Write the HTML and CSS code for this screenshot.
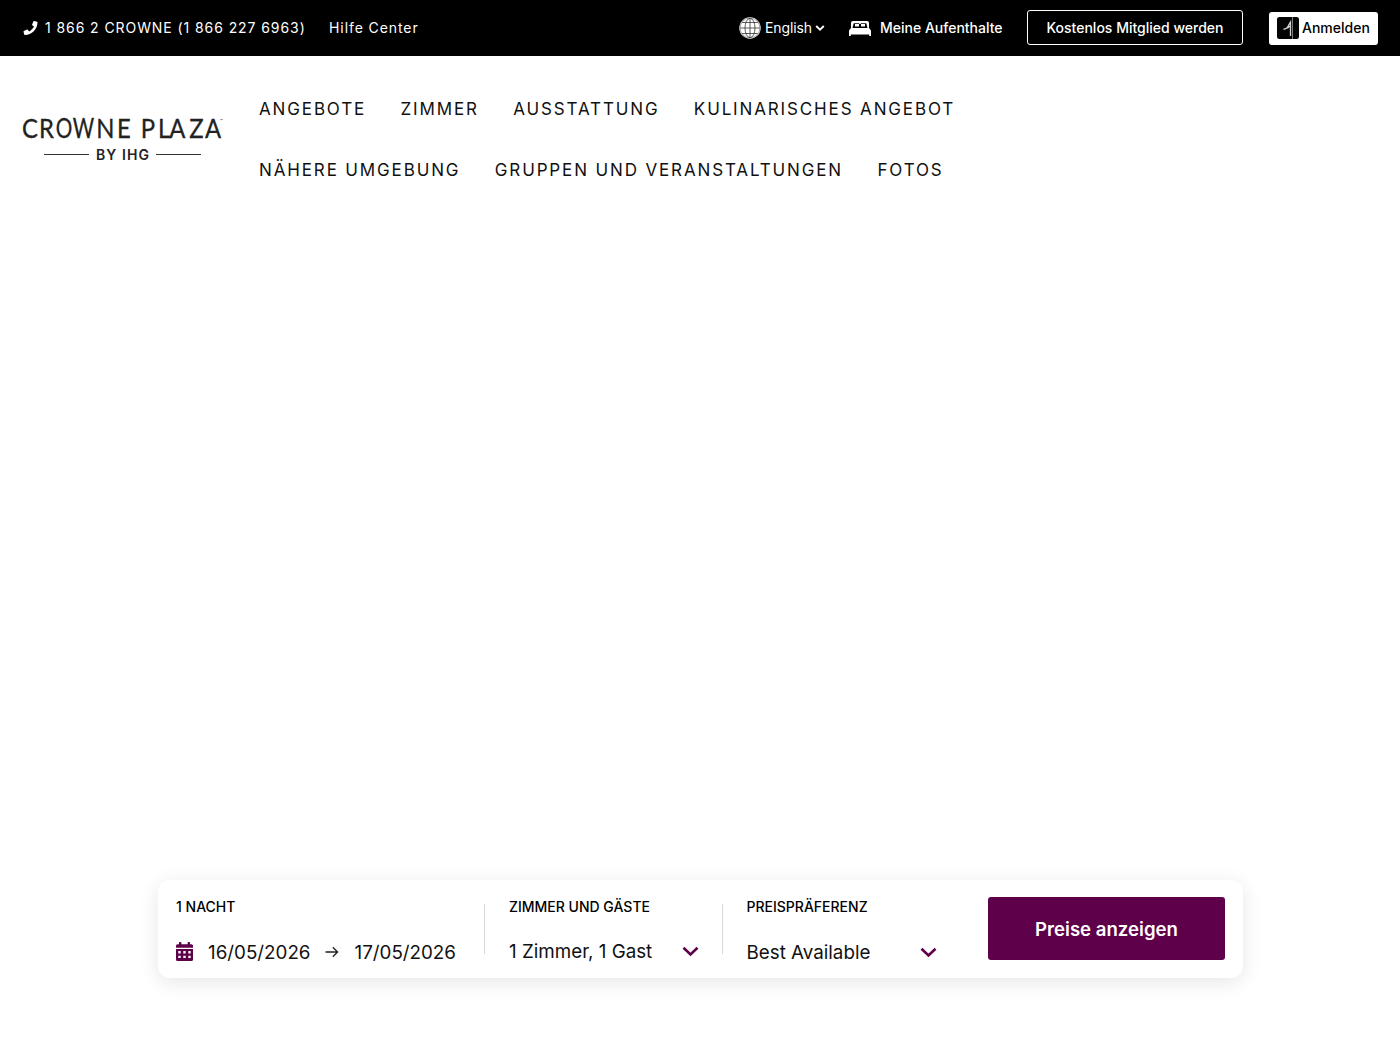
FILE: index.html
```html
<!DOCTYPE html>
<html lang="de">
<head>
<meta charset="utf-8">
<title>Crowne Plaza</title>
<link rel="stylesheet" href="styles.css">
</head>
<body>
<header class="topbar">
  <a class="phone">
    <svg class="phone-icon" viewBox="0 0 512 512"><path fill="#fff" d="M493 25 389 1c-11-3-23 3-27 14l-48 112c-4 10-1 22 7 28l61 50c-36 76-99 140-177 177l-50-61c-7-8-18-11-28-7L15 362c-11 5-17 16-14 27l24 104c3 11 12 19 24 19 256 0 463-207 463-463 0-12-8-22-19-24z"/></svg>
    <span>1 866 2 CROWNE (1 866 227 6963)</span>
  </a>
  <a class="help">Hilfe Center</a>
  <div class="language">
    <svg class="globe" viewBox="0 0 22 22"><circle cx="11" cy="11" r="10.7" fill="#fff"/><g fill="none" stroke="#333" stroke-width=".8"><circle cx="11" cy="11" r="9.9" stroke="#888"/><ellipse cx="11" cy="11" rx="5" ry="9.7"/><path d="M11 1.300v19.400M1.300 11h19.400M3.200 5.500h15.600M3.200 16.500h15.600"/></g></svg>
    <span>English</span>
    <svg class="small-chevron" viewBox="0 0 10 6"><path d="m1.200 1 3.800 3.700L8.800 1" fill="none" stroke="#fff" stroke-width="1.800"/></svg>
  </div>
  <a class="stays">
    <svg class="bed" viewBox="0 0 22 15"><path fill="#fff" d="M4 0h14a2 2 0 0 1 2 2v5h-1.500L17.300 2.200H4.700L3.500 7H2V2a2 2 0 0 1 2-2z"/><path fill="#fff" d="M6 3h4v2.500H6zM12 3h4v2.500h-4zM10.300 1h1.400v2h-1.400zM2 7h18l2 2.500V15h-1.800v-1.500H1.800V15H0V9.500z"/></svg>
    <span>Meine Aufenthalte</span>
  </a>
  <button class="join">Kostenlos Mitglied werden</button>
  <button class="login">
    <svg class="login-icon" viewBox="0 0 22 22"><rect width="22" height="22" rx="2.500" fill="#050505"/><path d="M15.500 0v22" stroke="#888" stroke-width=".9"/><path d="M6.300 12.200c3 .2 4.700-2 5.700-4.700L13.500 5v14M10 11.300l3.500-2.300" fill="none" stroke="#d5d5d5" stroke-width="1.300"/></svg>
    <span>Anmelden</span>
  </button>
</header>
<div class="masthead">
  <svg class="logo" viewBox="0 0 202 44">
    <g transform="scale(.9 1)">
      <text class="logo-name" x="0 18.800" y="20.300">CR</text>
      <text class="logo-name" x="82.500 105.500" y="20.300">NE</text>
      <text class="logo-name" x="132 151 163.600 185.700 203.300" y="20.300">PLAZA</text>
    </g>
    <g transform="scale(.78 1)">
      <text class="logo-name" x="43.300 65" y="20.300">OW</text>
    </g>
    <text class="logo-mark" x="198" y="4">™</text>
    <path d="M22 36.500h45M134 36.500h45" stroke="#333" stroke-width="1"/>
    <text class="logo-owner" x="74" y="42" textLength="53">BY IHG</text>
  </svg>
  <nav class="nav">
    <a>ANGEBOTE</a><a>ZIMMER</a><a>AUSSTATTUNG</a><a>KULINARISCHES ANGEBOT</a>
    <a>NÄHERE UMGEBUNG</a><a>GRUPPEN UND VERANSTALTUNGEN</a><a>FOTOS</a>
  </nav>
</div>
<main class="hero">
  <form class="booking">
    <div class="field dates">
      <label class="label">1 NACHT</label>
      <div class="value">
        <svg class="calendar" viewBox="0 0 17 19"><path fill="#5f004b" d="M0 7h17v10.500a1.500 1.500 0 0 1-1.500 1.500h-14A1.500 1.500 0 0 1 0 17.500zM1.500 2.300H3V.7a.7.7 0 0 1 .7-.7h1a.7.7 0 0 1 .7.7v1.600h6.200V.7a.7.700 0 0 1 .7-.7h1a.7.700 0 0 1 .7.7v1.600h1.500A1.500 1.500 0 0 1 17 3.800v2H0v-2a1.500 1.500 0 0 1 1.500-1.500z"/><path fill="#fff" d="M2.300 9h2.400v2.400H2.300zM7.300 9h2.400v2.400H7.300zM12.300 9h2.400v2.400h-2.400zM2.300 13.700h2.400v2.400H2.300zM7.300 13.700h2.400v2.400H7.300zM12.300 13.700h2.400v2.400h-2.400z"/></svg>
        <span class="date-start">16/05/2026</span>
        <svg class="arrow" viewBox="0 0 14 12"><path d="M.5 6h12M7.800 1.200 12.600 6l-4.800 4.800" fill="none" stroke="#222" stroke-width="1.300"/></svg>
        <span>17/05/2026</span>
      </div>
    </div>
    <div class="field rooms">
      <label class="label">ZIMMER UND GÄSTE</label>
      <div class="value"><span>1 Zimmer, 1 Gast</span><svg class="chevron" viewBox="0 0 17 11"><path d="m1.500 1.700 7 6.800 7-6.800" fill="none" stroke="#5f004b" stroke-width="2.600"/></svg></div>
    </div>
    <div class="field rate">
      <label class="label">PREISPRÄFERENZ</label>
      <div class="value"><span>Best Available</span><svg class="chevron" viewBox="0 0 17 11"><path d="m1.500 1.700 7 6.800 7-6.800" fill="none" stroke="#5f004b" stroke-width="2.600"/></svg></div>
    </div>
    <button class="submit" type="button">Preise anzeigen</button>
  </form>
</main>
</body>
</html>
```
FILE: styles.css
```css
* { box-sizing: border-box; }
body { margin: 0; height: 1050px; display: flex; flex-direction: column; background: #fff; color: #111; font-family: Inter, "Liberation Sans", sans-serif; overflow: hidden; }
svg { display: block; flex: none; overflow: visible; }
a, span, label { white-space: nowrap; }
button { font-family: inherit; padding: 0; }
.topbar { height: 56px; flex: none; display: flex; align-items: center; padding: 0 22px 1px 23px; background: #000; color: #fff; font-size: 14px; }
.phone { width: 306px; display: flex; align-items: center; gap: 7px; letter-spacing: .92px; }
.phone-icon { width: 15px; height: 14px; }
.help { letter-spacing: .92px; }
.language { display: flex; align-items: center; margin-left: auto; width: 110px; }
.globe { width: 22px; height: 22px; margin-right: 4px; }
.language span { letter-spacing: -.1px; }
.small-chevron { width: 10px; height: 6px; margin-left: 3px; }
.stays { display: flex; align-items: center; width: 178px; font-weight: 500; }
.bed { width: 22px; height: 15px; margin: 1px 9px 0 0; }
.join { width: 216px; height: 35px; border: 1px solid #fff; border-radius: 3px; background: #000; color: #fff; font-size: 14px; font-weight: 500; }
.login { width: 109px; height: 33px; margin: 1px 0 0 26px; display: flex; align-items: center; gap: 3px; padding: 0 0 1px 8px; border: 0; border-radius: 3px; background: #fff; color: #000; font-size: 14px; font-weight: 500; }
.login-icon { width: 22px; height: 22px; }
.masthead { display: flex; height: 154px; flex: none; padding: 22px 0 0 22px; }
.logo { width: 202px; height: 44px; margin-top: 40px; }
.logo-name { font: 400 26.5px Lato, sans-serif; fill: #222; stroke: #222; stroke-width: .3px; }
.logo-mark { font: 4px Lato, sans-serif; fill: #222; }
.logo-owner { font: 600 14px Inter, sans-serif; fill: #222; }
.nav { width: 740px; margin-left: 35px; display: flex; flex-wrap: wrap; align-content: flex-start; column-gap: 34.400px; }
.nav a { height: 61px; line-height: 63px; font-size: 17px; letter-spacing: 1.860px; }
.hero { flex: 1; display: flex; flex-direction: column; align-items: center; justify-content: flex-end; padding-bottom: 72px; }
.booking { width: 1085px; height: 98px; margin: 0; padding: 17px 16.500px 17px 18.500px; display: flex; background: #fff; border-radius: 12px; box-shadow: 0 4px 20px rgba(0, 0, 0, .1); }
.field { display: flex; flex-direction: column; height: 64px; }
.label { color: #000; font-size: 14px; font-weight: 500; line-height: 20px; }
.value { display: flex; align-items: center; height: 24px; margin-top: 23px; font-size: 18.800px; line-height: 24px; }
.value span { padding-top: 1px; }
.dates { width: 333px; }
.calendar { width: 17px; height: 19px; margin: -2px 15px 0 0; }
.date-start { width: 117px; }
.arrow { width: 14px; height: 12px; margin-right: 15.500px; }
.rooms { width: 237.500px; }
.rooms .value { width: 190px; margin-top: 22px; justify-content: space-between; }
.rate { width: 241.500px; }
.rate .value { width: 190px; justify-content: space-between; }
.rooms, .rate { position: relative; }
.rooms::before, .rate::before { content: ""; position: absolute; left: -25px; top: 7px; width: 1px; height: 50px; background: #d8d8d8; }
.chevron { width: 17px; height: 11px; }
.submit { width: 237px; height: 63px; border: 0; border-radius: 3px; background: #5f004b; color: #fff; font-size: 18.600px; font-weight: 600; }
```
